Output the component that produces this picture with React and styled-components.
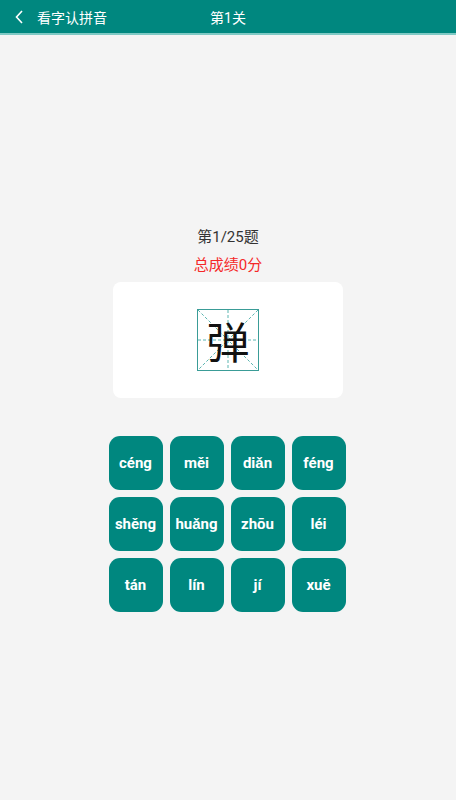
import React from 'react';
import styled, { createGlobalStyle } from 'styled-components';

const GlobalStyle = createGlobalStyle`
  html, body {
    margin: 0;
    padding: 0;
    background: #f4f4f4;
    font-family: Roboto, "Noto Sans CJK SC", sans-serif;
  }
`;

const Page = styled.div`
  width: 456px;
  min-height: 800px;
  background: #f4f4f4;
  display: flex;
  flex-direction: column;
`;

const TopBar = styled.div`
  height: 33px;
  background: #00877f;
  border-bottom: 2px solid #7fc9c4;
  display: flex;
  align-items: center;
  position: relative;
  color: #fff;
`;

const Back = styled.div`
  width: 37px;
  display: flex;
  justify-content: center;
  align-items: center;
`;

const BarTitle = styled.div`
  font-size: 14px;
`;

const BarCenter = styled.div`
  position: absolute;
  left: 0;
  right: 0;
  text-align: center;
  font-size: 14px;
  pointer-events: none;
`;

const Body = styled.div`
  display: flex;
  flex-direction: column;
  align-items: center;
  padding-top: 192px;
`;

const Progress = styled.div`
  font-size: 15px;
  color: #333;
  line-height: 20px;
`;

const Score = styled.div`
  font-size: 15px;
  color: #f52828;
  line-height: 20px;
  margin-top: 8px;
`;

const Card = styled.div`
  width: 230px;
  height: 116px;
  margin-top: 7px;
  background: #fff;
  border-radius: 8px;
  display: flex;
  align-items: center;
  justify-content: center;
`;

const Tian = styled.div`
  width: 60px;
  height: 60px;
  border: 1.5px solid #3a9c97;
  position: relative;
  display: flex;
  align-items: center;
  justify-content: center;
`;

const TianLines = styled.svg`
  position: absolute;
  inset: 0;
`;

const Han = styled.span`
  position: relative;
  font-family: "Noto Sans CJK SC", sans-serif;
  font-size: 43px;
  line-height: 1;
  color: #111;
`;

const Grid = styled.div`
  margin-top: 38px;
  margin-right: 2px;
  display: grid;
  grid-template-columns: repeat(4, 54px);
  grid-auto-rows: 54px;
  column-gap: 7px;
  row-gap: 7px;
`;

const Choice = styled.button`
  border: none;
  border-radius: 11px;
  background: #00877f;
  color: #fff;
  font-family: Roboto, sans-serif;
  font-weight: bold;
  font-size: 15px;
  padding: 0;
  display: flex;
  align-items: center;
  justify-content: center;
`;

const options = [
  'céng', 'měi', 'diǎn', 'féng',
  'shěng', 'huǎng', 'zhōu', 'léi',
  'tán', 'lín', 'jí', 'xuě',
];

export default function App() {
  return (
    <Page>
      <GlobalStyle />
      <TopBar>
        <Back>
          <svg width="10" height="16" viewBox="0 0 10 16">
            <path d="M8 2 L2.5 8 L8 14" fill="none" stroke="#fff" strokeWidth="1.6" />
          </svg>
        </Back>
        <BarTitle>看字认拼音</BarTitle>
        <BarCenter>第1关</BarCenter>
      </TopBar>
      <Body>
        <Progress>第1/25题</Progress>
        <Score>总成绩0分</Score>
        <Card>
          <Tian>
            <TianLines width="60" height="60" viewBox="0 0 60 60">
              <g stroke="#5bb5b0" strokeWidth="1" strokeDasharray="3 2" fill="none">
                <line x1="0" y1="0" x2="60" y2="60" />
                <line x1="60" y1="0" x2="0" y2="60" />
                <line x1="30" y1="0" x2="30" y2="60" />
                <line x1="0" y1="30" x2="60" y2="30" />
              </g>
            </TianLines>
            <Han>弹</Han>
          </Tian>
        </Card>
        <Grid>
          {options.map((o) => (
            <Choice key={o}>{o}</Choice>
          ))}
        </Grid>
      </Body>
    </Page>
  );
}
